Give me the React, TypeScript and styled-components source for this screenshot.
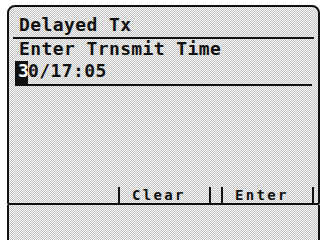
import React from "react";
import styled, { createGlobalStyle } from "styled-components";

const GlobalStyle = createGlobalStyle`
  html, body {
    margin: 0;
    padding: 0;
    background: #ffffff;
  }
  #root {
    width: 323px;
    height: 240px;
    overflow: hidden;
  }
`;

const dither = `
  background-color: #f8f8f8;
  background-image: repeating-conic-gradient(#c4c4c4 0 25%, #f8f8f8 0 50%);
  background-size: 2px 2px;
`;

const Device = styled.div`
  display: flex;
  flex-direction: column;
  padding: 5px 3px 0 7px;
  height: 240px;
  box-sizing: border-box;
  font-family: "DejaVu Sans Mono", "Liberation Mono", monospace;
  color: #111;
`;

const Screen = styled.div`
  ${dither}
  height: 200px;
  box-sizing: border-box;
  border: 2px solid #111;
  border-radius: 8px 8px 2px 2px;
  display: flex;
  flex-direction: column;
  padding-top: 8px;
`;

const Row = styled.div<{ $indent?: number }>`
  height: 19px;
  line-height: 19px;
  font-size: 18px;
  font-weight: bold;
  letter-spacing: 0.4px;
  padding-left: ${(p) => p.$indent ?? 10}px;
  white-space: pre;
`;

const Rule = styled.div<{ $inset: number; $top: number }>`
  height: 2px;
  background: #111;
  margin: ${(p) => p.$top}px ${(p) => p.$inset}px 0 ${(p) => p.$inset}px;
`;

const InputRow = styled.div`
  display: flex;
  align-items: stretch;
  height: 23px;
  margin-top: 3px;
  padding-left: 6px;
  font-size: 18px;
  font-weight: bold;
  letter-spacing: 0.4px;
  line-height: 19px;
`;

const Cursor = styled.span`
  background: #111;
  color: #fff;
  width: 13px;
  padding-left: 3px;
  box-sizing: border-box;
`;

const Spacer = styled.div`
  flex: 1;
`;

const SoftKeys = styled.div`
  display: flex;
  justify-content: flex-end;
  gap: 10px;
  padding-right: 4px;
  height: 16px;
`;

const SoftKey = styled.div<{ $empty?: boolean }>`
  width: 93px;
  box-sizing: border-box;
  border-left: 2px solid ${(p) => (p.$empty ? "transparent" : "#111")};
  border-right: 2px solid ${(p) => (p.$empty ? "transparent" : "#111")};
  padding-left: 12px;
  font-size: 14px;
  font-weight: bold;
  letter-spacing: 2.3px;
  line-height: 16px;
`;

const Tray = styled.div`
  ${dither}
  flex: 1;
  border-left: 2px solid #111;
  border-right: 2px solid #111;
`;

const keys = ["", "Clear", "Enter"];

export default function App() {
  return (
    <>
      <GlobalStyle />
      <Device>
        <Screen>
          <Row>Delayed Tx</Row>
          <Rule $inset={4} $top={3} />
          <Row>Enter Trnsmit Time</Row>
          <InputRow>
            <Cursor>3</Cursor>
            <span>0/17:05</span>
          </InputRow>
          <Rule $inset={6} $top={0} />
          <Spacer />
          <SoftKeys>
            {keys.map((k, i) => (
              <SoftKey key={i} $empty={!k}>
                {k}
              </SoftKey>
            ))}
          </SoftKeys>
        </Screen>
        <Tray />
      </Device>
    </>
  );
}
